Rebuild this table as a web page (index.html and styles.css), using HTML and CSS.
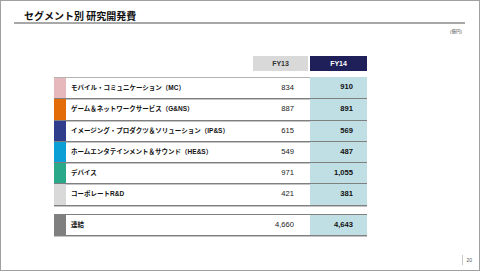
FILE: index.html
```html
<!DOCTYPE html>
<html lang="ja">
<head>
<meta charset="utf-8">
<title>セグメント別 研究開発費</title>
<link rel="stylesheet" href="styles.css">
</head>
<body>
<div class="slide">
  <h1 class="title">セグメント別 研究開発費</h1>
  <div class="rule"></div>
  <div class="unit">（億円）</div>
  <div class="table">
    <div class="head">
      <div class="hcell fy13">FY13</div>
      <div class="hcell fy14">FY14</div>
    </div>
    <div class="row first">
      <div class="strip c-mc"></div>
      <div class="label">モバイル・コミュニケーション（MC）</div>
      <div class="v13">834</div>
      <div class="v14">910</div>
    </div>
    <div class="row">
      <div class="strip c-gns"></div>
      <div class="label">ゲーム＆ネットワークサービス（G&amp;NS）</div>
      <div class="v13">887</div>
      <div class="v14">891</div>
    </div>
    <div class="row">
      <div class="strip c-ips"></div>
      <div class="label">イメージング・プロダクツ＆ソリューション（IP&amp;S）</div>
      <div class="v13">615</div>
      <div class="v14">569</div>
    </div>
    <div class="row">
      <div class="strip c-hes"></div>
      <div class="label">ホームエンタテインメント＆サウンド（HE&amp;S）</div>
      <div class="v13">549</div>
      <div class="v14">487</div>
    </div>
    <div class="row">
      <div class="strip c-dev"></div>
      <div class="label">デバイス</div>
      <div class="v13">971</div>
      <div class="v14">1,055</div>
    </div>
    <div class="row">
      <div class="strip c-corp"></div>
      <div class="label">コーポレートR&amp;D</div>
      <div class="v13">421</div>
      <div class="v14">381</div>
    </div>
    <div class="row total">
      <div class="strip c-total"></div>
      <div class="label">連結</div>
      <div class="v13">4,660</div>
      <div class="v14">4,643</div>
    </div>
  </div>
  <div class="footer">
    <span class="pageno">20</span>
  </div>
</div>
</body>
</html>
```
FILE: styles.css
```css
html, body {
  margin: 0;
  padding: 0;
  background: #ffffff;
}
.slide {
  width: 480px;
  height: 271px;
  box-sizing: border-box;
  border: 1px solid #a0a0a0;
  display: flex;
  flex-direction: column;
  font-family: "Liberation Sans", "Noto Sans CJK JP", sans-serif;
  color: #111;
}
.title {
  margin: 0;
  padding: 9px 0 0 23px;
  height: 12px;
  font-size: 10px;
  line-height: 12px;
  font-weight: 700;
  font-family: "Noto Sans CJK JP", sans-serif;
  color: #111;
}
.rule {
  height: 2px;
  margin: 0 14px 0 13px;
  background: #a8a8a8;
}
.unit {
  margin: 5px 14px 0 0;
  text-align: right;
  font-size: 4.5px;
  line-height: 5px;
  color: #444;
  font-family: "Noto Sans CJK JP", sans-serif;
}
.table {
  margin: 22px 0 0 53px;
  width: 313px;
  display: flex;
  flex-direction: column;
}
.head {
  display: grid;
  grid-template-columns: 199px 55px 2px 57px;
  height: 15px;
  margin-bottom: 6px;
}
.hcell {
  font-size: 7px;
  font-weight: 700;
  line-height: 15px;
  text-align: center;
}
.fy13 {
  grid-column: 2;
  background: #d9d9d9;
  color: #333;
}
.fy14 {
  grid-column: 4;
  background: #1f1f5a;
  color: #fff;
}
.row {
  display: grid;
  grid-template-columns: 12px 187px 57px 57px;
  height: 20.3px;
  border-bottom: 1px solid #808080;
  box-shadow: 0 1px 0 #c4c4c4;
}
.row.first {
  border-top: 1px solid #b4b4b4;
}
.row.first .v14 {
  margin-top: -1px;
}
.row.total {
  margin-top: 8px;
  border-top: 1px solid #808080;
}
.strip {
  align-self: stretch;
}
.label {
  padding-left: 5px;
  font-size: 6.5px;
  font-weight: 700;
  line-height: 20.3px;
  white-space: nowrap;
}
.v13, .v14 {
  font-size: 7.6px;
  line-height: 20.3px;
  text-align: right;
  color: #222;
}
.v13 {
  padding-right: 16px;
}
.v14 {
  padding-right: 14px;
  font-weight: 700;
  background: #bfdfe4;
  color: #111;
}
.c-mc { background: #e6b8bb; }
.c-gns { background: #e36c09; }
.c-ips { background: #2f3d8c; }
.c-hes { background: #0b9fd5; }
.c-dev { background: #2aa88a; }
.c-corp { background: #d9d9d9; }
.c-total { background: #7f7f7f; }
.footer {
  margin-top: auto;
  display: flex;
  justify-content: flex-end;
  padding: 0 7px 5px 0;
}
.pageno {
  border-left: 1px solid #c8c8c8;
  padding-left: 3px;
  font-size: 5px;
  line-height: 10px;
  color: #555;
}
```
